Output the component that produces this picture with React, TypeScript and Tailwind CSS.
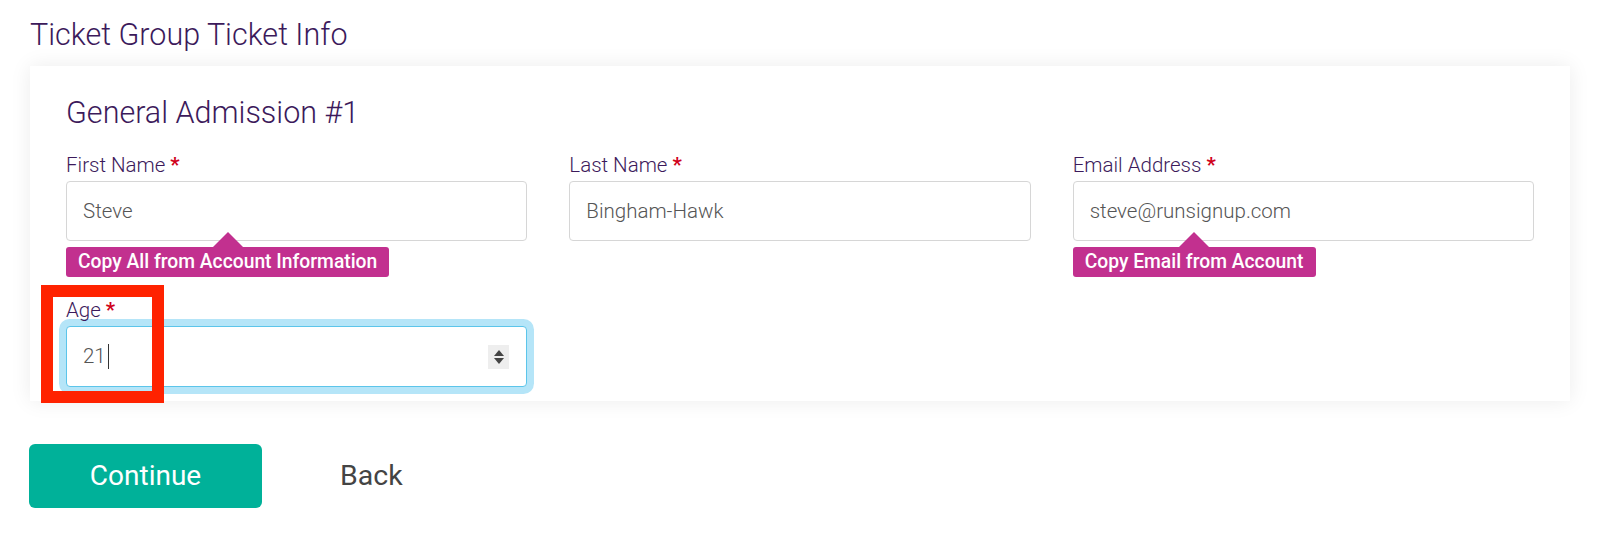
import React from "react";

const font = { fontFamily: "Roboto, 'Open Sans', Arial, sans-serif" };

function Label({ text }: { text: string }) {
  return (
    <div className="text-[20.5px] leading-6 font-light text-[#3c1a5b] mb-1">
      {text} <span className="font-bold text-[#d0021b]">*</span>
    </div>
  );
}

function TextField({ value }: { value: string }) {
  return (
    <div className="h-[60px] border border-[#d6d6d6] rounded-[4px] bg-white flex items-center pl-[16px] text-[20.5px] font-light text-[#555]">
      {value}
    </div>
  );
}

function CopyBadge({ text }: { text: string }) {
  return (
    <div className="relative inline-block mt-[6px] bg-[#c2308f] rounded-[3px] h-[30px] px-3 text-white text-[19.3px] leading-[30px] font-medium">
      <span className="absolute left-1/2 -translate-x-1/2 -top-[15px] w-0 h-0 border-l-[15px] border-r-[15px] border-b-[15px] border-l-transparent border-r-transparent border-b-[#c2308f]" />
      {text}
    </div>
  );
}

export default function App() {
  return (
    <div className="relative bg-white w-[1600px] h-[540px] px-[30px] pt-[17px]" style={font}>
      {/* Page heading */}
      <h1 className="text-[30.5px] leading-9 font-light text-[#3c1a5b]">Ticket Group Ticket Info</h1>

      {/* Ticket card */}
      <div className="mt-[13px] bg-white shadow-[0_0_20px_rgba(0,0,0,0.08)] px-9 pt-[29px] pb-[14px]">
        <h2 className="text-[30.5px] leading-9 font-light text-[#3c1a5b]">General Admission #1</h2>

        <div className="grid grid-cols-3 gap-x-[42px] mt-[22px]">
          <div>
            <Label text="First Name" />
            <TextField value="Steve" />
            <CopyBadge text="Copy All from Account Information" />
          </div>
          <div>
            <Label text="Last Name" />
            <TextField value="Bingham-Hawk" />
          </div>
          <div>
            <Label text="Email Address" />
            <TextField value="steve@runsignup.com" />
            <CopyBadge text="Copy Email from Account" />
          </div>
        </div>

        <div className="grid grid-cols-3 gap-x-[42px] mt-[21px]">
          <div>
            <Label text="Age" />
            <div className="h-[61px] border border-[#5cc5ea] rounded-[4px] bg-white shadow-[0_0_0_7px_#b5e5f8] flex items-center pl-[16px] pr-[17px] text-[20.5px] font-light text-[#555]">
              <span>21</span>
              <span className="w-px h-[25px] bg-[#333] ml-[2px]" />
              <div className="ml-auto w-[21px] h-[24px] bg-[#eeeeee] flex flex-col items-center justify-center gap-[2px]">
                <span className="w-0 h-0 border-l-[5px] border-r-[5px] border-b-[6px] border-l-transparent border-r-transparent border-b-[#444]" />
                <span className="w-0 h-0 border-l-[5px] border-r-[5px] border-t-[6px] border-l-transparent border-r-transparent border-t-[#444]" />
              </div>
            </div>
          </div>
        </div>
      </div>

      {/* Actions */}
      <div className="flex items-center mt-[43px]">
        <button className="w-[233px] h-[64px] rounded-[6px] bg-[#00b199] text-white text-[28px] -ml-px">
          Continue
        </button>
        <button className="ml-[78px] text-[28.5px] text-[#444]">Back</button>
      </div>

      {/* Annotation highlight */}
      <div className="absolute left-[41px] top-[285px] w-[123px] h-[118px] border-[12px] border-[#ff2200]" />
    </div>
  );
}
